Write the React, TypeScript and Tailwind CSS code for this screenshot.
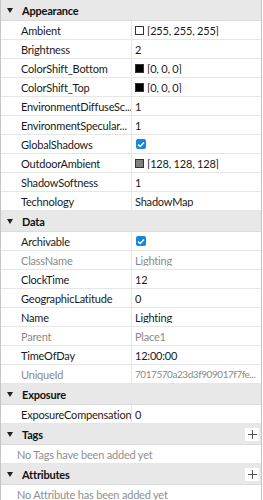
import React from "react";

type Val =
  | { kind: "text"; text: string; muted?: boolean; tight?: boolean }
  | { kind: "color"; text: string; swatch: string }
  | { kind: "check" };

type Row = { label: string; value: Val; muted?: boolean };

const appearance: Row[] = [
  { label: "Ambient", value: { kind: "color", text: "[255, 255, 255]", swatch: "#ffffff" } },
  { label: "Brightness", value: { kind: "text", text: "2" } },
  { label: "ColorShift_Bottom", value: { kind: "color", text: "[0, 0, 0]", swatch: "#000000" } },
  { label: "ColorShift_Top", value: { kind: "color", text: "[0, 0, 0]", swatch: "#000000" } },
  { label: "EnvironmentDiffuseSc...", value: { kind: "text", text: "1" } },
  { label: "EnvironmentSpecular...", value: { kind: "text", text: "1" } },
  { label: "GlobalShadows", value: { kind: "check" } },
  { label: "OutdoorAmbient", value: { kind: "color", text: "[128, 128, 128]", swatch: "#808080" } },
  { label: "ShadowSoftness", value: { kind: "text", text: "1" } },
  { label: "Technology", value: { kind: "text", text: "ShadowMap" } },
];

const data: Row[] = [
  { label: "Archivable", value: { kind: "check" } },
  { label: "ClassName", muted: true, value: { kind: "text", text: "Lighting", muted: true } },
  { label: "ClockTime", value: { kind: "text", text: "12" } },
  { label: "GeographicLatitude", value: { kind: "text", text: "0" } },
  { label: "Name", value: { kind: "text", text: "Lighting" } },
  { label: "Parent", muted: true, value: { kind: "text", text: "Place1", muted: true } },
  { label: "TimeOfDay", value: { kind: "text", text: "12:00:00" } },
  {
    label: "UniqueId",
    muted: true,
    value: { kind: "text", text: "7017570a23d3f909017f7fe...", muted: true, tight: true },
  },
];

const exposure: Row[] = [
  { label: "ExposureCompensation", value: { kind: "text", text: "0" } },
];

function Header({ title, plus }: { title: string; plus?: boolean }) {
  return (
    <div className="flex h-[21px] items-center bg-[#e8e8e8] border-b border-[#dcdcdc]">
      <svg width="6" height="5" viewBox="0 0 6 5" className="ml-[6px] mr-[9px] shrink-0">
        <path d="M0 0 L6 0 L3 5 Z" fill="#1e1e1e" />
      </svg>
      <span className="font-bold text-[#111]">{title}</span>
      {plus && (
        <div className="ml-auto mr-[2px] flex h-[13px] w-[14px] items-center justify-center bg-white">
          <svg width="9" height="9" viewBox="0 0 9 9">
            <path d="M4.5 0 V9 M0 4.5 H9" stroke="#555" strokeWidth="1" />
          </svg>
        </div>
      )}
    </div>
  );
}

function Check() {
  return (
    <div className="ml-[1px] flex h-[10px] w-[10px] items-center justify-center rounded-[2px] bg-[#1b84dc]">
      <svg width="8" height="7" viewBox="0 0 8 7">
        <path d="M1 3.6 L3.1 5.6 L7 1.4" stroke="#fff" strokeWidth="1.4" fill="none" />
      </svg>
    </div>
  );
}

function PropRow({ row }: { row: Row }) {
  const v = row.value;
  return (
    <div className="flex h-[19px] items-center border-b border-[#e6e6e6] bg-white">
      <div
        className={`flex h-full w-[131px] shrink-0 items-center overflow-hidden whitespace-nowrap border-r border-[#e6e6e6] pl-[20px] ${
          row.muted ? "text-[#8a8a8a]" : "text-[#1a1a1a]"
        }`}
      >
        {row.label}
      </div>
      <div className="flex min-w-0 flex-1 items-center gap-[3px] overflow-hidden whitespace-nowrap pl-[3px]">
        {v.kind === "text" && (
          <span
            className={`${v.muted ? "text-[#8a8a8a]" : "text-[#1a1a1a]"} ${
              v.tight ? "text-[10px] tracking-[-0.45px]" : ""
            }`}
          >
            {v.text}
          </span>
        )}
        {v.kind === "color" && (
          <>
            <div
              className="h-[9px] w-[9px] shrink-0 border border-[#333]"
              style={{ backgroundColor: v.swatch }}
            />
            <span className="text-[#1a1a1a]">{v.text}</span>
          </>
        )}
        {v.kind === "check" && <Check />}
      </div>
    </div>
  );
}

function Empty({ text }: { text: string }) {
  return (
    <div className="flex h-[19px] items-center border-b border-[#e6e6e6] bg-white pl-[16px] whitespace-nowrap text-[#8f8f8f]">
      {text}
    </div>
  );
}

export default function App() {
  return (
    <div
      className="h-[500px] w-[263px] overflow-hidden bg-white text-[11px] leading-none tracking-[-0.2px]"
      style={{ fontFamily: "Lato, 'Noto Sans', sans-serif" }}
    >
      <div className="w-[262px] border-l border-r border-[#c4c4c4]">
        <Header title="Appearance" />
        {appearance.map((r) => (
          <PropRow key={r.label} row={r} />
        ))}
        <Header title="Data" />
        {data.map((r) => (
          <PropRow key={r.label} row={r} />
        ))}
        <Header title="Exposure" />
        {exposure.map((r) => (
          <PropRow key={r.label} row={r} />
        ))}
        <Header title="Tags" plus />
        <Empty text="No Tags have been added yet" />
        <Header title="Attributes" plus />
        <Empty text="No Attribute has been added yet" />
      </div>
    </div>
  );
}
